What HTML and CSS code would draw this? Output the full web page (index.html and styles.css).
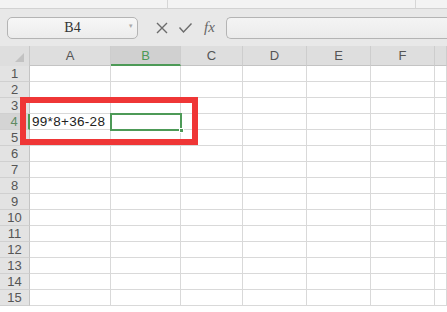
FILE: index.html
```html
<!DOCTYPE html>
<html lang="zh-CN">
<head>
    <meta charset="UTF-8">
    <title>Sheet</title>
    <link rel="stylesheet" href="styles.css">
</head>
<body>
    <div class="top-strip">
        <span class="strip-sep sep-1"></span>
        <span class="strip-sep sep-2"></span>
    </div>
    <div class="toolbar">
        <div class="name-box">
            <span class="name-text">B4</span>
            <span class="name-arrow">&#9662;</span>
        </div>
        <div class="tool-icons">
            <svg width="14" height="14" viewBox="0 0 14 14"><path d="M2 2 L12 12 M12 2 L2 12" stroke="#6b6b6b" stroke-width="1.4" fill="none"/></svg>
            <svg width="15" height="14" viewBox="0 0 15 14"><path d="M1.5 6.5 L5.5 11 L13.5 2.5" stroke="#6b6b6b" stroke-width="1.4" fill="none"/></svg>
            <span class="fx">fx</span>
        </div>
        <div class="formula-box"></div>
    </div>

    <div class="sheet">
        <div class="grid">
            <div class="corner"><span class="corner-tri"></span></div>
            <div class="col-head">A</div>
            <div class="col-head active">B</div>
            <div class="col-head">C</div>
            <div class="col-head">D</div>
            <div class="col-head">E</div>
            <div class="col-head">F</div>
            <div class="col-head"></div>
        </div>
        <div class="grid" id="rows"></div>

        <div class="red-mark"></div>
    </div>

    <script>
        const rows = document.getElementById('rows');
        let html = '';
        for (let r = 1; r <= 15; r++) {
            html += `<div class="row-head${r === 4 ? ' active' : ''}">${r}</div>`;
            for (let c = 0; c < 7; c++) {
                let cls = 'cell';
                let text = '';
                if (r === 4 && c === 0) { text = '99*8+36-28'; }
                if (r === 4 && c === 1) { cls += ' selected'; }
                html += `<div class="${cls}">${text}${cls.includes('selected') ? '<span class="handle"></span>' : ''}</div>`;
            }
        }
        rows.innerHTML = html;
    </script>
</body>
</html>
```

FILE: styles.css
```css
* {
    box-sizing: border-box;
}
body {
    margin: 0;
    width: 447px;
    height: 312px;
    overflow: hidden;
    background: #ffffff;
    font-family: "Liberation Sans", Arial, sans-serif;
}
.top-strip {
    position: relative;
    height: 9px;
    background: #f3f3f3;
    border-bottom: 1px solid #d2d2d2;
}
.strip-sep {
    position: absolute;
    top: 0;
    width: 1px;
    height: 8px;
    background: #d6d6d6;
}
.sep-1 { left: 167px; }
.sep-2 { left: 415px; }
.toolbar {
    display: flex;
    align-items: center;
    height: 37px;
    padding: 0 0 0 7px;
    background: #e8e8e8;
}
.name-box {
    position: relative;
    display: flex;
    align-items: center;
    justify-content: center;
    width: 131px;
    height: 22px;
    border: 1px solid #b4b4b4;
    border-radius: 5px;
    background: linear-gradient(#f7f7f7, #ececec);
    font-family: "Liberation Serif", serif;
    font-size: 14px;
    color: #333;
}
.name-arrow {
    position: absolute;
    right: 4px;
    top: 4px;
    font-size: 7px;
    color: #aaa;
}
.tool-icons {
    display: flex;
    align-items: center;
    gap: 9px;
    margin-left: 17px;
    width: 70px;
}
.fx {
    font-family: "Liberation Serif", serif;
    font-style: italic;
    font-size: 15px;
    color: #666;
    margin-left: 2px;
}
.formula-box {
    flex: 1;
    height: 22px;
    margin-left: 1px;
    border: 1px solid #b4b4b4;
    border-right: none;
    border-radius: 5px 0 0 5px;
    background: linear-gradient(#f4f4f4, #ebebeb);
}
.sheet {
    position: relative;
}
.grid {
    display: grid;
    grid-template-columns: 30px 81px 70px 62px 64px 64px 64px 12px;
}
.corner {
    position: relative;
    height: 20px;
    background: #dedede;
    border-right: 1px solid #c8c8c8;
}
.corner-tri {
    position: absolute;
    right: 5px;
    bottom: 4px;
    width: 0;
    height: 0;
    border-left: 9px solid transparent;
    border-bottom: 9px solid #c2c2c2;
}
.col-head {
    height: 20px;
    display: flex;
    align-items: center;
    justify-content: center;
    background: #dedede;
    border-right: 1px solid #cdcdcd;
    border-bottom: 1px solid #c4c4c4;
    font-size: 13px;
    color: #555;
}
.col-head.active {
    background: #d0d0d0;
    color: #4d9a57;
    border-bottom: 2px solid #4d9a57;
}
.row-head {
    height: 16px;
    display: flex;
    align-items: center;
    justify-content: center;
    background: #e3e3e3;
    border-right: 1px solid #c4c4c4;
    border-bottom: 1px solid #d0d0d0;
    font-size: 13px;
    color: #555;
}
.row-head.active {
    background: #d4d4d4;
    color: #5f8a63;
    border-right: 2px solid #4d9a57;
}
.cell {
    position: relative;
    height: 16px;
    border-right: 1px solid #d9d9d9;
    border-bottom: 1px solid #d9d9d9;
    font-size: 13.5px;
    letter-spacing: 0.3px;
    line-height: 15px;
    padding-left: 2px;
    color: #222;
    white-space: nowrap;
}
.cell.selected {
    outline: 2px solid #4d9a57;
    outline-offset: -1px;
    z-index: 1;
}
.handle {
    position: absolute;
    right: -4px;
    bottom: -4px;
    width: 5px;
    height: 5px;
    background: #4d9a57;
    border: 1px solid #fff;
}
.red-mark {
    position: absolute;
    left: 20px;
    top: 51px;
    width: 178px;
    height: 48px;
    border: 6px solid #ef3636;
    z-index: 2;
}
```
